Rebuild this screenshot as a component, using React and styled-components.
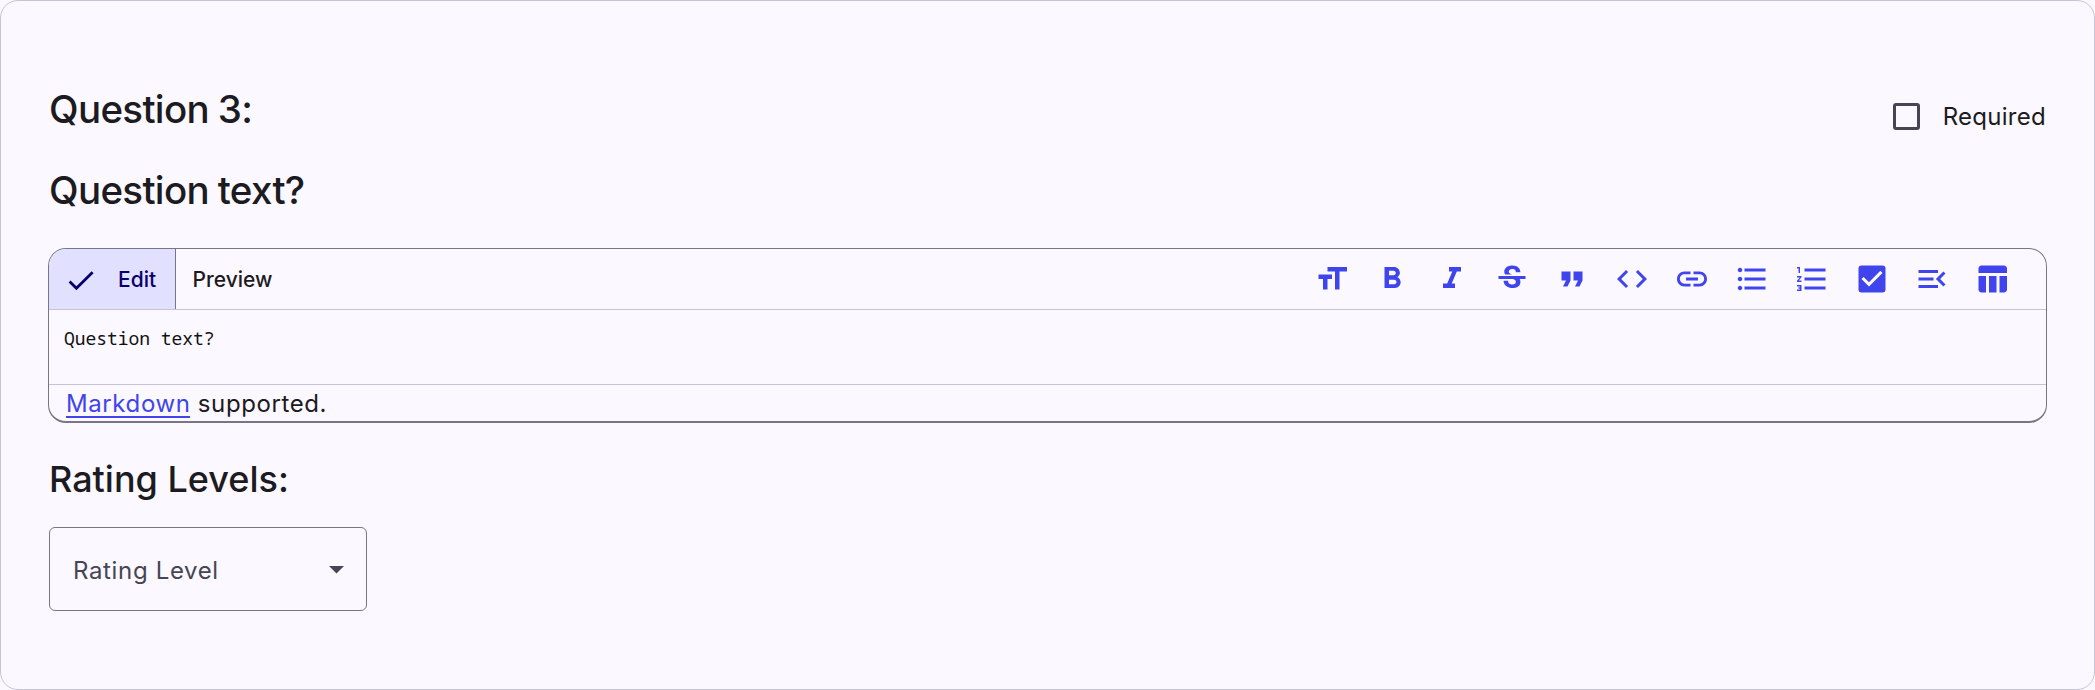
import React from "react";
import styled, { createGlobalStyle } from "styled-components";
import {
  MdFormatSize, MdFormatBold, MdFormatItalic, MdStrikethroughS, MdFormatQuote, MdCode,
  MdLink, MdFormatListBulleted, MdFormatListNumbered, MdCheckBox, MdMenuOpen, MdTableChart,
} from "react-icons/md";

const color = {
  surface: "#fbf8ff", text: "#1b1b21", muted: "#464555", outline: "#777587",
  divider: "#c7c4d8", primary: "#4044ec", selected: "#e1e0ff", onSelected: "#07006c",
};

const GlobalStyle = createGlobalStyle`
  * { box-sizing: border-box; }
  body { margin: 0; background: ${color.surface}; font-family: Inter, "Liberation Sans", sans-serif; color: ${color.text}; }
`;
const Card = styled.section`
  width: 100%; height: 690px; padding: 82px 47px 0;
  border: 1px solid ${color.divider}; border-radius: 18px; background: ${color.surface};
`;
const Header = styled.header`
  display: flex; justify-content: space-between; height: 81px; padding-right: 1px;
`;
const Title = styled.h2`
  margin: 0; padding-left: 1px; font-size: 38.5px; line-height: 52px; font-weight: 500;
  letter-spacing: -0.67px; word-spacing: -0.8px; white-space: nowrap;
`;
const Subtitle = styled.h3`
  margin: 32px 0 0; padding-left: 1px; font-size: 36px; line-height: 48px; font-weight: 500; white-space: nowrap;
`;
const Check = styled.label`
  display: flex; align-items: center; gap: 23px; height: 30px; margin-top: 18px;
  font-size: 24px; letter-spacing: 0.27px;
`;
const Box = styled.span`
  width: 27px; height: 27px; border: 3px solid ${color.muted}; border-radius: 3px;
`;
const Editor = styled.div`
  display: flex; flex-direction: column; height: 175px; margin-top: 32px; overflow: hidden;
  border: 1px solid ${color.outline}; border-bottom-width: 2px; border-radius: 18px;
`;
const Toolbar = styled.div`
  display: flex; justify-content: space-between; height: 61px; flex: none; border-bottom: 1px solid ${color.divider};
`;
const Tabs = styled.div`display: flex;`;
const Tab = styled.button`
  display: flex; align-items: center; height: 60px; border: 0; padding: 0 17px;
  font: 500 21px Inter, sans-serif; letter-spacing: 0;
  background: ${(p) => (p.$active ? color.selected : "transparent")};
  color: ${(p) => (p.$active ? color.onSelected : color.text)};
  ${(p) => p.$active && `padding: 0 18.5px 0 18px; border-right: 1px solid ${color.outline};`}
  svg { width: 27px; height: 27px; margin-right: 24px; }
`;
const Tools = styled.div`display: flex; align-items: center; padding-right: 24px;`;
const Tool = styled.button`
  display: grid; place-items: center; width: 60px; height: 60px; padding: 0; border: 0;
  background: none; color: ${color.primary};
  svg { width: 36px; height: 36px; }
`;
const Source = styled.div`
  height: 75px; flex: none; padding: 16px 15px; border-bottom: 1px solid ${color.divider};
  font: 18px/24px "Noto Sans Mono", "Liberation Mono", monospace; letter-spacing: -0.05px; color: #111;
`;
const Hint = styled.div`
  padding: 1px 0 0 17px; font-size: 24px; line-height: 36px; letter-spacing: 0.6px;
`;
const Link = styled.a`
  display: inline-block; height: 32px; color: ${color.primary}; border-bottom: 2px solid ${color.primary};
`;
const Select = styled.div`
  display: flex; align-items: center; justify-content: space-between; width: 318px; height: 84px;
  margin: 24px 0 0 1px; padding: 2px 22px 0 23px; border: 1px solid ${color.outline}; border-radius: 6px;
  font-size: 24px; letter-spacing: 0.65px; color: ${color.muted};
`;
const Arrow = styled.svg`width: 15px; height: 8px; fill: currentColor;`;

const tools = [
  MdFormatSize, MdFormatBold, MdFormatItalic, MdStrikethroughS, MdFormatQuote, MdCode,
  MdLink, MdFormatListBulleted, MdFormatListNumbered, MdCheckBox, MdMenuOpen, MdTableChart,
];

export default function App() {
  return (
    <>
      <GlobalStyle />
      <Card>
        <Header>
          <Title>Question 3:</Title>
          <Check><Box />Required</Check>
        </Header>
        <Title>Question text?</Title>
        <Editor>
          <Toolbar>
            <Tabs>
              <Tab $active>
                <svg viewBox="0 0 27 27" fill="none" stroke="currentColor" strokeWidth="2.8">
                  <path d="M2.6 15.5l6.8 6.7L25.6 6.3" />
                </svg>
                Edit
              </Tab>
              <Tab>Preview</Tab>
            </Tabs>
            <Tools>{tools.map((Icon, i) => <Tool key={i}><Icon /></Tool>)}</Tools>
          </Toolbar>
          <Source>Question text?</Source>
          <Hint><Link>Markdown</Link> supported.</Hint>
        </Editor>
        <Subtitle>Rating Levels:</Subtitle>
        <Select>
          Rating Level
          <Arrow viewBox="0 0 15 8"><path d="M0 0h15L7.5 7.5z" /></Arrow>
        </Select>
      </Card>
    </>
  );
}
